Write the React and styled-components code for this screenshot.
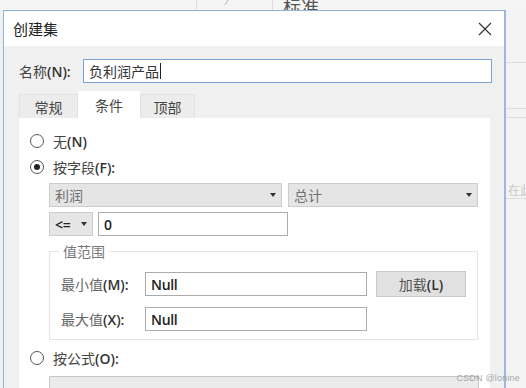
import styled, { createGlobalStyle } from "styled-components";

const GlobalStyle = createGlobalStyle`
  html, body {
    margin: 0;
    padding: 0;
    background: #f3f3f3;
  }
  body {
    font-family: "Noto Sans CJK SC", "Liberation Sans", sans-serif;
    color: #333;
  }
`;

const Page = styled.div`
  position: relative;
  width: 526px;
  height: 388px;
  overflow: hidden;
  display: flex;
  flex-direction: column;
  background: #f3f3f3;
`;

const Ribbon = styled.div`
  height: 10px;
  flex-shrink: 0;
  display: flex;
  align-items: flex-end;
  overflow: hidden;
  background: #f5f5f5;
  color: #9a9a9a;
  font-size: 13px;
  line-height: 20px;
`;

const RibbonCell = styled.div`
  width: ${({ $w }) => $w}px;
  height: 20px;
  flex-shrink: 0;
  padding-left: ${({ $pad }) => $pad || 0}px;
  box-sizing: border-box;
  border-right: ${({ $sep }) => ($sep ? "1px solid #dcdcdc" : "none")};
  color: ${({ $dark }) => ($dark ? "#555" : "#b5b5b5")};
  font-size: ${({ $big }) => ($big ? "18px" : "13px")};
  margin-bottom: ${({ $big }) => ($big ? "-6px" : "0")};
`;

const Main = styled.div`
  flex: 1;
  min-height: 0;
  display: flex;
`;

const Gutter = styled.div`
  width: 3px;
  flex-shrink: 0;
  background: #f0f0f0;
`;

const Dialog = styled.div`
  width: 503px;
  flex-shrink: 0;
  display: flex;
  flex-direction: column;
  border: 1px solid #93b2dc;
  border-bottom: none;
  border-right: 2px solid #9bb9e2;
  box-sizing: border-box;
  background: #f0f0f0;
`;

const TitleBar = styled.div`
  height: 35px;
  flex-shrink: 0;
  display: flex;
  align-items: center;
  justify-content: space-between;
  padding: 0 12px 0 9px;
  background: #fff;
`;

const Title = styled.div`
  font-size: 15px;
  color: #222;
`;

const Body = styled.div`
  flex: 1;
  display: flex;
  flex-direction: column;
  padding: 13px 12px 0 15px;
`;

const Row = styled.div`
  display: flex;
  align-items: center;
  gap: ${({ $gap }) => $gap || 0}px;
`;

const Label = styled.div`
  width: ${({ $w }) => $w}px;
  flex-shrink: 0;
  font-size: 14px;
  color: ${({ $muted }) => ($muted ? "#666" : "#444")};
  white-space: nowrap;
`;

const Key = styled.span`
  font-family: "Open Sans", "Liberation Sans", sans-serif;
  font-weight: 600;
  color: #333;
`;

const TextBox = styled.div`
  width: ${({ $w }) => ($w ? `${$w}px` : "auto")};
  flex: ${({ $w }) => ($w ? "none" : "1")};
  height: 24px;
  box-sizing: border-box;
  display: flex;
  align-items: center;
  padding-left: 5px;
  background: #fff;
  border: 1px solid ${({ $focus }) => ($focus ? "#7ba3d4" : "#ababab")};
  font-size: 14px;
  color: #333;
`;

const LatinText = styled.span`
  font-family: "Open Sans", "Liberation Sans", sans-serif;
  font-weight: 600;
  font-size: 14px;
  letter-spacing: -0.3px;
  color: #222;
`;

const Caret = styled.span`
  display: inline-block;
  width: 1px;
  height: 16px;
  margin-left: 1px;
  background: #222;
`;

const Tabs = styled.div`
  display: flex;
  align-items: flex-end;
  height: 27px;
  margin-top: 8px;
  flex-shrink: 0;
`;

const Tab = styled.div`
  width: ${({ $w }) => $w}px;
  height: ${({ $active }) => ($active ? 27 : 24)}px;
  box-sizing: border-box;
  display: flex;
  align-items: center;
  justify-content: center;
  font-size: 14px;
  color: #444;
  background: ${({ $active }) => ($active ? "#fff" : "#ececec")};
  border: 1px solid ${({ $active }) => ($active ? "#fff" : "#e2e2e2")};
  border-bottom: none;
`;

const Panel = styled.div`
  flex: 1;
  margin-right: 2px;
  background: #fff;
  display: flex;
  flex-direction: column;
  padding: 13px 0 0 11px;
`;

const RadioRow = styled.div`
  display: flex;
  align-items: center;
  gap: 9px;
  height: 20px;
  flex-shrink: 0;
  margin-top: ${({ $top }) => $top || 0}px;
  font-size: 14px;
  color: #444;
`;

const RadioCircle = styled.span`
  width: 14px;
  height: 14px;
  box-sizing: border-box;
  border-radius: 50%;
  border: 1px solid #555;
  display: flex;
  align-items: center;
  justify-content: center;

  &::after {
    content: "";
    width: 6px;
    height: 6px;
    border-radius: 50%;
    background: ${({ $on }) => ($on ? "#222" : "transparent")};
  }
`;

const Indented = styled.div`
  margin-left: 19px;
  margin-top: ${({ $top }) => $top || 0}px;
  display: flex;
  flex-shrink: 0;
  gap: ${({ $gap }) => $gap || 0}px;
`;

const Select = styled.div`
  width: ${({ $w }) => $w}px;
  height: 24px;
  box-sizing: border-box;
  display: flex;
  align-items: center;
  justify-content: space-between;
  padding: 0 5px 0 5px;
  background: #e5e5e5;
  border: 1px solid #cdcdcd;
  font-size: 14px;
  color: ${({ $dark }) => ($dark ? "#222" : "#707070")};
`;

const Arrow = styled.span`
  width: 0;
  height: 0;
  border-left: 3px solid transparent;
  border-right: 3px solid transparent;
  border-top: 4px solid #333;
`;

const Group = styled.fieldset`
  margin: 5px 0 0 19px;
  width: 429px;
  flex-shrink: 0;
  box-sizing: border-box;
  padding: 10px 0 8px 11px;
  border: 1px solid #e4e4e4;
  display: flex;
  flex-direction: column;
  gap: 10px;

  legend {
    padding: 0 4px;
    margin-left: -2px;
    font-size: 14px;
    color: #777;
  }
`;

const Button = styled.div`
  width: 90px;
  height: 26px;
  margin-left: 9px;
  box-sizing: border-box;
  display: flex;
  align-items: center;
  justify-content: center;
  background: #e1e1e1;
  border: 1px solid #c9c9c9;
  font-size: 14px;
  color: #555;
`;

const FormulaBox = styled.div`
  margin: 8px 0 0 19px;
  width: 430px;
  height: 30px;
  flex-shrink: 0;
  box-sizing: border-box;
  background: #ebebeb;
  border: 1px solid #c7c7c7;
`;

const Outside = styled.div`
  flex: 1;
  min-width: 0;
  overflow: hidden;
  background: #f4f4f4;
  display: flex;
  flex-direction: column;
`;

const OutsideLine = styled.div`
  height: ${({ $h }) => $h}px;
  flex-shrink: 0;
  border-bottom: 1px solid #dedede;
  color: #c8c8c8;
  font-size: 12px;
  white-space: nowrap;
  display: flex;
  align-items: flex-end;
  padding-left: 2px;
`;

const Watermark = styled.div`
  position: absolute;
  right: 6px;
  bottom: 5px;
  font-family: "Liberation Sans", sans-serif;
  font-size: 9px;
  color: rgba(150, 150, 150, 0.85);
  letter-spacing: 0.2px;
`;

function CloseIcon() {
  return (
    <svg width="14" height="14" viewBox="0 0 14 14">
      <path d="M1 1 L13 13 M13 1 L1 13" stroke="#333" strokeWidth="1.2" />
    </svg>
  );
}

export default function App() {
  return (
    <>
      <GlobalStyle />
      <Page>
        <Ribbon>
          <RibbonCell $w={197} $sep />
          <RibbonCell $w={76} $pad={30} $sep>
            ⁄
          </RibbonCell>
          <RibbonCell $w={127} $pad={10} $dark $big>
            标准
          </RibbonCell>
          <RibbonCell $w={126} $pad={16} />
        </Ribbon>
        <Main>
          <Gutter />
          <Dialog>
            <TitleBar>
              <Title>创建集</Title>
              <CloseIcon />
            </TitleBar>
            <Body>
              <Row>
                <Label $w={64}>
                  名称<Key>(N):</Key>
                </Label>
                <TextBox $focus>
                  负利润产品
                  <Caret />
                </TextBox>
              </Row>
              <Tabs>
                <Tab $w={59}>常规</Tab>
                <Tab $w={62} $active>
                  条件
                </Tab>
                <Tab $w={55}>顶部</Tab>
              </Tabs>
              <Panel>
                <RadioRow>
                  <RadioCircle />
                  <span>
                    无<Key>(N)</Key>
                  </span>
                </RadioRow>
                <RadioRow $top={6}>
                  <RadioCircle $on />
                  <span>
                    按字段<Key>(F):</Key>
                  </span>
                </RadioRow>
                <Indented $top={6} $gap={6}>
                  <Select $w={233}>
                    利润
                    <Arrow />
                  </Select>
                  <Select $w={190}>
                    总计
                    <Arrow />
                  </Select>
                </Indented>
                <Indented $top={5} $gap={5}>
                  <Select $w={44} $dark>
                    <LatinText>&lt;=</LatinText>
                    <Arrow />
                  </Select>
                  <TextBox $w={190}>
                    <LatinText>0</LatinText>
                  </TextBox>
                </Indented>
                <Group>
                  <legend>值范围</legend>
                  <Row>
                    <Label $w={84} $muted>
                      最小值<Key>(M):</Key>
                    </Label>
                    <TextBox $w={222}>
                      <LatinText>Null</LatinText>
                    </TextBox>
                    <Button>
                      加载<Key>(L)</Key>
                    </Button>
                  </Row>
                  <Row>
                    <Label $w={84} $muted>
                      最大值<Key>(X):</Key>
                    </Label>
                    <TextBox $w={222}>
                      <LatinText>Null</LatinText>
                    </TextBox>
                  </Row>
                </Group>
                <RadioRow $top={8}>
                  <RadioCircle />
                  <span>
                    按公式<Key>(O):</Key>
                  </span>
                </RadioRow>
                <FormulaBox />
              </Panel>
            </Body>
          </Dialog>
          <Outside>
            <OutsideLine $h={52} />
            <OutsideLine $h={45} />
            <OutsideLine $h={8} />
            <OutsideLine $h={80}>在此</OutsideLine>
          </Outside>
        </Main>
        <Watermark>CSDN @lonine</Watermark>
      </Page>
    </>
  );
}
